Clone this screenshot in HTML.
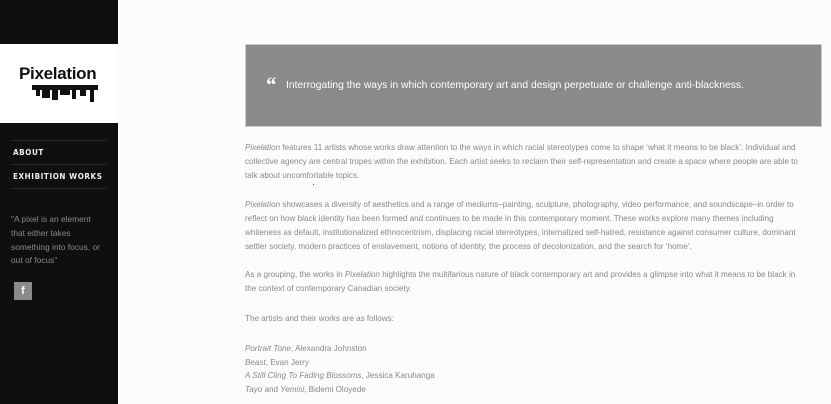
<!DOCTYPE html>
<html><head><meta charset="utf-8"><style>
body{margin:0;width:831px;height:404px;overflow:hidden;background:#fcfcfc;font-family:"Liberation Sans",sans-serif;position:relative}
.sb{position:absolute;left:0;top:0;width:118px;height:404px;background:#0f0f0f}
.logo{position:absolute;left:0;top:44px;width:118px;height:79px;background:#fff}
.logo .t{position:absolute;left:19px;top:20px;font-size:17px;font-weight:bold;color:#111;letter-spacing:-0.3px}
.nav{position:absolute;left:11px;width:96px;border-top:1px solid #2a2a2a;font-family:"DejaVu Sans Condensed","Liberation Sans",sans-serif;font-weight:bold;font-size:8px;color:#eee;letter-spacing:0.6px;white-space:nowrap}
.nav div{height:23px;line-height:23px;border-bottom:1px solid #2a2a2a;padding-left:2px}
.q{position:absolute;left:11px;top:213px;width:94px;font-size:8.4px;line-height:13.8px;color:#8a8a8a}
.fb{position:absolute;left:14px;top:282px;width:18px;height:18px;background:#8a8a8a;color:#fff;font-size:11px;font-weight:bold;text-align:center;line-height:19px}
.box{position:absolute;left:245px;top:44px;width:577px;height:83px;background:#8a8a8a;border:1px solid #ccc;box-sizing:border-box}
.box span{position:absolute;left:40px;top:35px;font-size:10.3px;color:#fff;white-space:nowrap}
.box i{position:absolute;left:19px;top:27px;font-size:22px;color:#fff;font-weight:bold;font-family:"Liberation Serif",serif}
.main{position:absolute;left:245px;width:575px;font-size:8.1px;line-height:14px;color:#888}
</style></head><body>
<div class="sb"></div>
<div class="logo"><div class="t">Pixelation</div>
<svg style="position:absolute;left:32px;top:41px" width="70" height="22"><g fill="#111"><rect x="0" y="0" width="66" height="5"/><rect x="4" y="5" width="4" height="6"/><rect x="10" y="5" width="8" height="8"/><rect x="20" y="5" width="6" height="10"/><rect x="28" y="5" width="10" height="5"/><rect x="40" y="5" width="4" height="9"/><rect x="48" y="5" width="6" height="6"/><rect x="58" y="5" width="4" height="12"/></g></svg></div>
<div class="nav" style="top:140px"><div>ABOUT</div><div>EXHIBITION WORKS</div></div>
<div class="q">"A pixel is an element that either takes something into focus, or out of focus"</div>
<div class="fb">f</div>
<div class="box"><i>“</i><span>Interrogating the ways in which contemporary art and design perpetuate or challenge anti-blackness.</span></div>
<div class="main" style="top:141px;width:562px"><i>Pixelation</i> features 11 artists whose works draw attention to the ways in which racial stereotypes come to shape ‘what it means to be black’. Individual and collective agency are central tropes within the exhibition. Each artist seeks to reclaim their self-representation and create a space where people are able to talk about uncomfortable topics.</div>
<div style="position:absolute;left:313px;top:184px;width:1px;height:1px;background:#44f"></div>
<div class="main" style="top:198px;width:565px"><i>Pixelation</i> showcases a diversity of aesthetics and a range of mediums–painting, sculpture, photography, video performance, and soundscape–in order to reflect on how black identity has been formed and continues to be made in this contemporary moment. These works explore many themes including whiteness as default, institutionalized ethnocentrism, displacing racial stereotypes, internalized self-hatred, resistance against consumer culture, dominant settler society, modern practices of enslavement, notions of identity, the process of decolonization, and the search for ‘home’.</div>
<div class="main" style="top:268px;width:552px">As a grouping, the works in <i>Pixelation</i> highlights the multifarious nature of black contemporary art and provides a glimpse into what it means to be black in the context of contemporary Canadian society.</div>
<div class="main" style="top:312px">The artists and their works are as follows:</div>
<div class="main" style="top:342px;line-height:13.5px"><i>Portrait Tone</i>, Alexandra Johnston<br><i>Beast</i>, Evan Jerry<br><i>A Still Cling To Fading Blossoms</i>, Jessica Karuhanga<br><i>Tayo</i> and <i>Yemisi</i>, Bidemi Oloyede</div>
</body></html>
